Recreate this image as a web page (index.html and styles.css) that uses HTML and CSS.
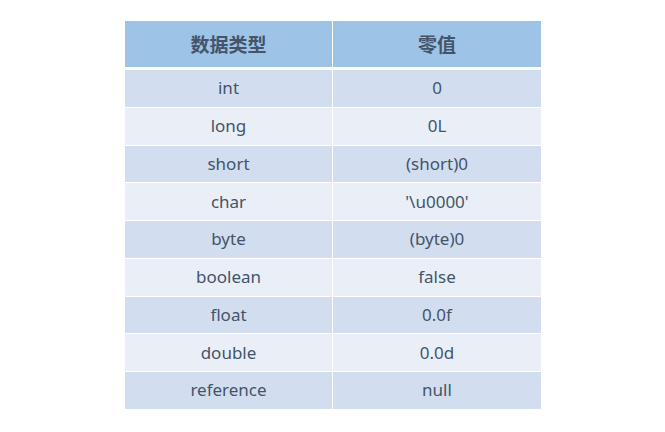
FILE: index.html
```html
<!DOCTYPE html>
<html lang="zh">
<head>
<meta charset="utf-8">
<link rel="stylesheet" href="styles.css">
</head>
<body>
<div class="page">
  <table class="zero-table">
    <thead>
      <tr><th>数据类型</th><th>零值</th></tr>
    </thead>
    <tbody>
      <tr class="odd"><td>int</td><td>0</td></tr>
      <tr class="even"><td>long</td><td>0L</td></tr>
      <tr class="odd"><td>short</td><td>(short)0</td></tr>
      <tr class="even"><td>char</td><td>'\u0000'</td></tr>
      <tr class="odd"><td>byte</td><td>(byte)0</td></tr>
      <tr class="even"><td>boolean</td><td>false</td></tr>
      <tr class="odd"><td>float</td><td>0.0f</td></tr>
      <tr class="even"><td>double</td><td>0.0d</td></tr>
      <tr class="odd"><td>reference</td><td>null</td></tr>
    </tbody>
  </table>
</div>
</body>
</html>
```
FILE: styles.css
```css
html, body {
  margin: 0;
  padding: 0;
  background: #ffffff;
}
.page {
  padding-top: 21px;
  padding-left: 125px;
}
.zero-table {
  border-collapse: collapse;
  border-spacing: 0;
  font-family: "Noto Sans", "Noto Sans CJK SC", sans-serif;
  color: #44546a;
  table-layout: fixed;
  width: 416px;
}
.zero-table th,
.zero-table td {
  padding: 0;
  text-align: center;
  vertical-align: middle;
}
.zero-table th:first-child,
.zero-table td:first-child {
  width: 207px;
  border-right: 1px solid #ffffff;
}
.zero-table th {
  background: #9dc3e6;
  height: 46px;
  font-size: 19px;
  font-weight: bold;
  border-bottom: 3px solid #ffffff;
}
.zero-table td {
  height: 36.75px;
  font-size: 17px;
  line-height: 20px;
}
.zero-table tbody tr + tr td {
  border-top: 1px solid #ffffff;
}
.zero-table tr.odd td {
  background: #d2deef;
}
.zero-table tr.even td {
  background: #eaeff7;
}
```
